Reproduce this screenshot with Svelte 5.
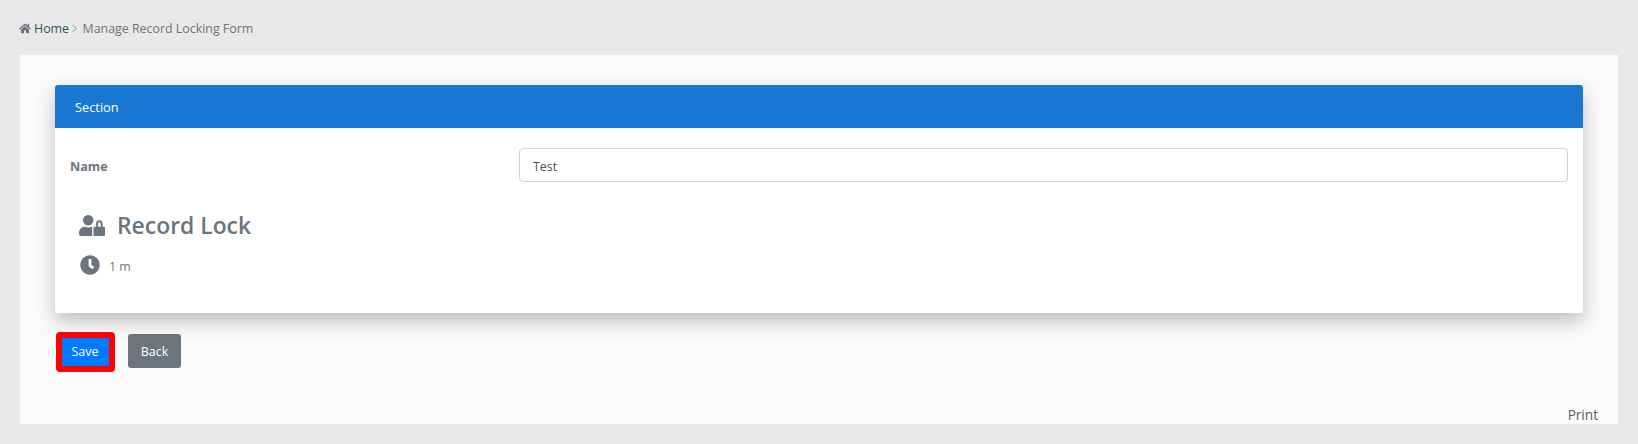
<script>
  const title = 'Manage Record Locking Form';
</script>

<div class="page">
  <nav class="crumbs">
    <svg class="home" viewBox="0 0 576 512" aria-hidden="true"><path d="M280.4 148.3 96 300.1V464a16 16 0 0 0 16 16l112-.3a16 16 0 0 0 16-16V368a16 16 0 0 1 16-16h64a16 16 0 0 1 16 16v95.600a16 16 0 0 0 16 16l112 .3a16 16 0 0 0 16-16V300L295.700 148.300a12.200 12.200 0 0 0-15.300 0zM571.600 251.500 488 182.600V44a12 12 0 0 0-12-12h-56a12 12 0 0 0-12 12v72.600L318.500 43a48 48 0 0 0-61 0L4.300 251.500a12 12 0 0 0-1.600 16.900l25.500 31a12 12 0 0 0 16.900 1.600l235.200-193.700a12.200 12.200 0 0 1 15.300 0L530.900 301a12 12 0 0 0 16.900-1.600l25.500-31a12 12 0 0 0-1.700-16.900z"/></svg>
    <span class="home-link">Home</span>
    <svg class="chev" viewBox="0 0 6 10" aria-hidden="true"><path d="M1 1l4 4-4 4" fill="none" stroke="currentColor" stroke-width="1"/></svg>
    <span class="current">{title}</span>
  </nav>

  <main class="panel">
    <section class="card">
      <header class="card-head">Section</header>
      <div class="card-body">
        <div class="row">
          <label class="name" for="name">Name</label>
          <input id="name" class="input" value="Test" />
        </div>
        <h2 class="lock-title">
          <svg class="user-lock" viewBox="0 0 640 512" aria-hidden="true"><path d="M224 256A128 128 0 1 0 224 0a128 128 0 0 0 0 256zm96 64a63.100 63.100 0 0 1 8.100-30.500c-4.800-.5-9.500-1.500-14.500-1.500h-16.700a174.100 174.100 0 0 1-145.800 0h-16.700A134.400 134.400 0 0 0 0 422.400V464a48 48 0 0 0 48 48h280.900a63.500 63.500 0 0 1-8.900-32zm288-32h-32v-80a80 80 0 0 0-160 0v80h-32a32 32 0 0 0-32 32v160a32 32 0 0 0 32 32h224a32 32 0 0 0 32-32V320a32 32 0 0 0-32-32zm-80 0h-64v-80a32 32 0 0 1 64 0z"/></svg>
          <span>Record Lock</span>
        </h2>
        <div class="duration">
          <svg class="clock" viewBox="0 0 512 512" aria-hidden="true"><path d="M256 8C119 8 8 119 8 256s111 248 248 248 248-111 248-248S393 8 256 8zm57.100 350.100L224.900 294c-3.100-2.300-4.900-5.900-4.900-9.700V116c0-6.600 5.400-12 12-12h48c6.600 0 12 5.400 12 12v137.700l63.500 46.200c5.400 3.900 6.500 11.400 2.600 16.800l-28.200 38.800c-3.900 5.300-11.400 6.500-16.800 2.600z"/></svg>
          <span>1 m</span>
        </div>
      </div>
    </section>

    <div class="actions">
      <button class="btn save" type="button">Save</button>
      <button class="btn back" type="button">Back</button>
    </div>

    <div class="print">Print</div>
  </main>
</div>

<style>
  :global(body) {
    margin: 0;
    background: #e9e9e9;
    font-family: "Open Sans", "Noto Sans", "Liberation Sans", sans-serif;
  }
  .page {
    height: 444px;
    padding: 0 20px 20px;
    box-sizing: border-box;
    display: flex;
    flex-direction: column;
  }
  .crumbs {
    height: 55px;
    display: flex;
    align-items: center;
    font-size: 12.4px;
    padding-top: 2px;
    box-sizing: border-box;
  }
  .home { width: 12px; height: 11px; fill: #6c757d; margin: 0 3px 0 -1px; }
  .home-link { color: #2f5460; }
  .chev { width: 5px; height: 9px; color: #6c757d; margin: 0 5.500px 0 3px; }
  .current { color: #6c757d; }
  .panel {
    flex: 1;
    background: #fbfbfb;
    padding: 30px 35px 0;
    display: flex;
    flex-direction: column;
    position: relative;
  }
  .card {
    background: #fff;
    height: 228px;
    border-radius: 3px;
    box-shadow: 0 8px 20px rgba(0, 0, 0, 0.25);
  }
  .card-head {
    height: 43px;
    line-height: 45px;
    background: #1976d2;
    color: #fff;
    font-size: 12.8px;
    padding-left: 20px;
    border-radius: 3px 3px 0 0;
  }
  .card-body { padding: 20px 15px 0; }
  .row { display: flex; align-items: center; height: 34px; }
  .name {
    width: 449px;
    color: #6c757d;
    font-weight: 700;
    font-size: 12.6px;
    flex: none;
    padding-top: 2px;
  }
  .input {
    flex: 1;
    min-width: 0;
    height: 34px;
    box-sizing: border-box;
    border: 1px solid #ced4da;
    border-radius: 4px;
    padding: 2px 13px 0;
    font: inherit;
    font-size: 12.4px;
    color: #495057;
    background: #fff;
    outline: none;
  }
  .lock-title {
    margin: 25px 0 0 9px;
    display: flex;
    align-items: center;
    height: 36px;
    color: #6c757d;
    font-size: 22.900px;
    font-weight: 600;
  }
  .user-lock { width: 26.300px; height: 21px; fill: #6c757d; margin-right: 11.700px; }
  .duration {
    margin: 12px 0 0 10px;
    display: flex;
    align-items: center;
    color: #6c757d;
    font-size: 12.4px;
  }
  .clock { width: 20px; height: 20px; fill: #6c757d; margin-right: 9px; }
  .duration span { padding-top: 3px; }
  .actions {
    display: flex;
    align-items: flex-start;
    gap: 13px;
    margin: 19px 0 0 1px;
  }
  .btn {
    border: 0;
    color: #fff;
    font: inherit;
    font-size: 12.4px;
    padding: 0;
    height: 34px;
    border-radius: 3px;
  }
  .save {
    box-sizing: content-box;
    width: 46px;
    padding: 0 1px 1px 0;
    background: #007bff;
    border: 6px solid #f00;
    height: 27px;
    border-radius: 4px;
  }
  .back { width: 53px; background: #6c757d; margin-top: 2px; }
  .print {
    position: absolute;
    right: 20px;
    bottom: 0;
    color: #4f6166;
    font-size: 13.6px;
  }
</style>
